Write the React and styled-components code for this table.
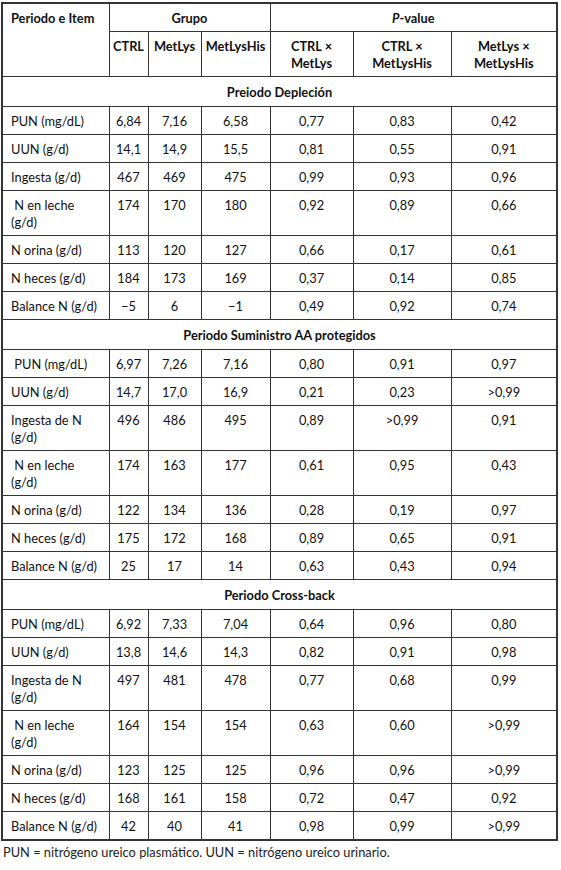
import styled, { createGlobalStyle } from "styled-components"

const GlobalStyle = createGlobalStyle`
  body {
    margin: 0;
    background: #fff;
    font-family: Lato, "Open Sans", sans-serif;
    color: #111;
  }
`

const Page = styled.div`
  padding: 2px 0 0 1px;
  width: 556px;
`

const Table = styled.table`
  border-collapse: collapse;
  width: 555px;
  table-layout: fixed;
  font-size: 12.8px;
  line-height: 17px;
  border: 2px solid #333;
`

const HeadCell = styled.th`
  border: 1px solid #333;
  font-weight: 700;
  text-align: ${(p) => (p.$left ? "left" : "center")};
  vertical-align: top;
  padding: 6px ${(p) => (p.$left ? "8px" : "2px")} 4px;
`

const Cell = styled.td`
  border: 1px solid #333;
  text-align: ${(p) => (p.$left ? "left" : "center")};
  vertical-align: top;
  padding: 6px ${(p) => (p.$left ? "8px" : "2px")} 4px;
  white-space: pre-wrap;
`

const SectionCell = styled.td`
  border: 1px solid #333;
  font-weight: 700;
  text-align: center;
  padding: 7px 2px 5px;
`

const Note = styled.p`
  margin: 2px 0 0 2px;
  font-size: 12.8px;
  line-height: 18px;
  color: #222;
`

const sections = [
  {
    title: "Preiodo Depleción",
    rows: [
      ["PUN (mg/dL)", "6,84", "7,16", "6,58", "0,77", "0,83", "0,42"],
      ["UUN (g/d)", "14,1", "14,9", "15,5", "0,81", "0,55", "0,91"],
      ["Ingesta (g/d)", "467", "469", "475", "0,99", "0,93", "0,96"],
      [" N en leche (g/d)", "174", "170", "180", "0,92", "0,89", "0,66"],
      ["N orina (g/d)", "113", "120", "127", "0,66", "0,17", "0,61"],
      ["N heces (g/d)", "184", "173", "169", "0,37", "0,14", "0,85"],
      ["Balance N (g/d)", "−5", "6", "−1", "0,49", "0,92", "0,74"],
    ],
  },
  {
    title: "Periodo Suministro AA protegidos",
    rows: [
      [" PUN (mg/dL)", "6,97", "7,26", "7,16", "0,80", "0,91", "0,97"],
      ["UUN (g/d)", "14,7", "17,0", "16,9", "0,21", "0,23", ">0,99"],
      ["Ingesta de N (g/d)", "496", "486", "495", "0,89", ">0,99", "0,91"],
      [" N en leche (g/d)", "174", "163", "177", "0,61", "0,95", "0,43"],
      ["N orina (g/d)", "122", "134", "136", "0,28", "0,19", "0,97"],
      ["N heces (g/d)", "175", "172", "168", "0,89", "0,65", "0,91"],
      ["Balance N (g/d)", "25", "17", "14", "0,63", "0,43", "0,94"],
    ],
  },
  {
    title: "Periodo Cross-back",
    rows: [
      ["PUN (mg/dL)", "6,92", "7,33", "7,04", "0,64", "0,96", "0,80"],
      ["UUN (g/d)", "13,8", "14,6", "14,3", "0,82", "0,91", "0,98"],
      ["Ingesta de N (g/d)", "497", "481", "478", "0,77", "0,68", "0,99"],
      [" N en leche (g/d)", "164", "154", "154", "0,63", "0,60", ">0,99"],
      ["N orina (g/d)", "123", "125", "125", "0,96", "0,96", ">0,99"],
      ["N heces (g/d)", "168", "161", "158", "0,72", "0,47", "0,92"],
      ["Balance N (g/d)", "42", "40", "41", "0,98", "0,99", ">0,99"],
    ],
  },
]

const widths = [107, 39, 53, 69, 83, 98, 106]

export default function App() {
  return (
    <Page>
      <GlobalStyle />
      <Table>
        <colgroup>
          {widths.map((w, i) => (
            <col key={i} style={{ width: w }} />
          ))}
        </colgroup>
        <thead>
          <tr>
            <HeadCell $left rowSpan={2}>Periodo e Item</HeadCell>
            <HeadCell colSpan={3}>Grupo</HeadCell>
            <HeadCell colSpan={3}>
              <i>P</i>-value
            </HeadCell>
          </tr>
          <tr>
            <HeadCell>CTRL</HeadCell>
            <HeadCell>MetLys</HeadCell>
            <HeadCell>MetLysHis</HeadCell>
            <HeadCell>CTRL × MetLys</HeadCell>
            <HeadCell>CTRL × MetLysHis</HeadCell>
            <HeadCell>MetLys × MetLysHis</HeadCell>
          </tr>
        </thead>
        <tbody>
          {sections.map((s) => [
            <tr key={s.title}>
              <SectionCell colSpan={7}>{s.title}</SectionCell>
            </tr>,
            ...s.rows.map((r, i) => (
              <tr key={s.title + i}>
                {r.map((v, j) => (
                  <Cell key={j} $left={j === 0}>
                    {v}
                  </Cell>
                ))}
              </tr>
            )),
          ])}
        </tbody>
      </Table>
      <Note>PUN = nitrógeno ureico plasmático. UUN = nitrógeno ureico urinario.</Note>
    </Page>
  )
}
